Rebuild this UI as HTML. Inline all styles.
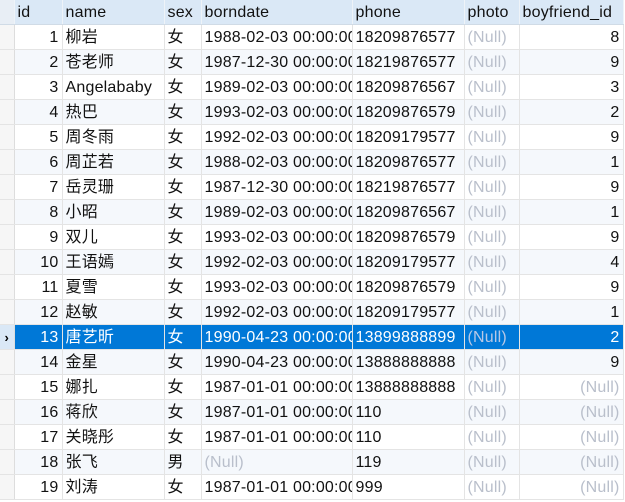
<!DOCTYPE html>
<html><head><meta charset="utf-8"><style>
body{margin:0;width:625px;height:502px;overflow:hidden;background:#fff;font-family:"Liberation Sans","Noto Sans CJK SC",sans-serif;font-size:16px;letter-spacing:0.2px;color:#111}
table{border-collapse:collapse;table-layout:fixed;position:absolute;left:0;top:0;width:623px}
td,th{height:24px;padding:0;border-right:1px solid #e4e4e4;border-bottom:1px solid #e4e4e4;white-space:nowrap;overflow:hidden;font-weight:normal;text-align:left}
td>div,th>div{height:24px;line-height:26px;overflow:hidden;padding:0 3px;white-space:nowrap}
th{background:#dae8f6;border-right:1px solid #eef3f8;border-bottom:1px solid #d0dbe6}
td.i{background:#f6f6f6;border-right:1px solid #ddd}
th.i{background:#e8eef5}
td.n{text-align:right}
.nl{color:#b9bfcb}
tr:nth-child(odd) td{background:#f5f8fc}
tr:nth-child(odd) td.i{background:#f6f6f6}
tr.s td{background:#0078d7;color:#fff}
tr.s td.nl{color:#b8c8e6}
tr.s td.i{background:#dae8f6;color:#000;font-size:13px;font-weight:bold;text-align:center}
tr.s td.i div{padding:0}
</style></head><body>
<table>
<colgroup><col style="width:14px"><col style="width:48px"><col style="width:102px"><col style="width:37px"><col style="width:151px"><col style="width:112px"><col style="width:55px"><col style="width:104px"></colgroup>
<tr><th class="i"><div></div></th><th><div>id</div></th><th><div>name</div></th><th><div>sex</div></th><th><div>borndate</div></th><th><div>phone</div></th><th><div>photo</div></th><th><div>boyfriend_id</div></th></tr>
<tr><td class="i"><div></div></td><td class="n"><div>1</div></td><td><div>柳岩</div></td><td><div>女</div></td><td><div>1988-02-03 00:00:00</div></td><td><div>18209876577</div></td><td class="nl"><div>(Null)</div></td><td class="n"><div>8</div></td></tr>
<tr><td class="i"><div></div></td><td class="n"><div>2</div></td><td><div>苍老师</div></td><td><div>女</div></td><td><div>1987-12-30 00:00:00</div></td><td><div>18219876577</div></td><td class="nl"><div>(Null)</div></td><td class="n"><div>9</div></td></tr>
<tr><td class="i"><div></div></td><td class="n"><div>3</div></td><td><div>Angelababy</div></td><td><div>女</div></td><td><div>1989-02-03 00:00:00</div></td><td><div>18209876567</div></td><td class="nl"><div>(Null)</div></td><td class="n"><div>3</div></td></tr>
<tr><td class="i"><div></div></td><td class="n"><div>4</div></td><td><div>热巴</div></td><td><div>女</div></td><td><div>1993-02-03 00:00:00</div></td><td><div>18209876579</div></td><td class="nl"><div>(Null)</div></td><td class="n"><div>2</div></td></tr>
<tr><td class="i"><div></div></td><td class="n"><div>5</div></td><td><div>周冬雨</div></td><td><div>女</div></td><td><div>1992-02-03 00:00:00</div></td><td><div>18209179577</div></td><td class="nl"><div>(Null)</div></td><td class="n"><div>9</div></td></tr>
<tr><td class="i"><div></div></td><td class="n"><div>6</div></td><td><div>周芷若</div></td><td><div>女</div></td><td><div>1988-02-03 00:00:00</div></td><td><div>18209876577</div></td><td class="nl"><div>(Null)</div></td><td class="n"><div>1</div></td></tr>
<tr><td class="i"><div></div></td><td class="n"><div>7</div></td><td><div>岳灵珊</div></td><td><div>女</div></td><td><div>1987-12-30 00:00:00</div></td><td><div>18219876577</div></td><td class="nl"><div>(Null)</div></td><td class="n"><div>9</div></td></tr>
<tr><td class="i"><div></div></td><td class="n"><div>8</div></td><td><div>小昭</div></td><td><div>女</div></td><td><div>1989-02-03 00:00:00</div></td><td><div>18209876567</div></td><td class="nl"><div>(Null)</div></td><td class="n"><div>1</div></td></tr>
<tr><td class="i"><div></div></td><td class="n"><div>9</div></td><td><div>双儿</div></td><td><div>女</div></td><td><div>1993-02-03 00:00:00</div></td><td><div>18209876579</div></td><td class="nl"><div>(Null)</div></td><td class="n"><div>9</div></td></tr>
<tr><td class="i"><div></div></td><td class="n"><div>10</div></td><td><div>王语嫣</div></td><td><div>女</div></td><td><div>1992-02-03 00:00:00</div></td><td><div>18209179577</div></td><td class="nl"><div>(Null)</div></td><td class="n"><div>4</div></td></tr>
<tr><td class="i"><div></div></td><td class="n"><div>11</div></td><td><div>夏雪</div></td><td><div>女</div></td><td><div>1993-02-03 00:00:00</div></td><td><div>18209876579</div></td><td class="nl"><div>(Null)</div></td><td class="n"><div>9</div></td></tr>
<tr><td class="i"><div></div></td><td class="n"><div>12</div></td><td><div>赵敏</div></td><td><div>女</div></td><td><div>1992-02-03 00:00:00</div></td><td><div>18209179577</div></td><td class="nl"><div>(Null)</div></td><td class="n"><div>1</div></td></tr>
<tr class="s"><td class="i"><div>&#x203A;</div></td><td class="n"><div>13</div></td><td><div>唐艺昕</div></td><td><div>女</div></td><td><div>1990-04-23 00:00:00</div></td><td><div>13899888899</div></td><td class="nl"><div>(Null)</div></td><td class="n"><div>2</div></td></tr>
<tr><td class="i"><div></div></td><td class="n"><div>14</div></td><td><div>金星</div></td><td><div>女</div></td><td><div>1990-04-23 00:00:00</div></td><td><div>13888888888</div></td><td class="nl"><div>(Null)</div></td><td class="n"><div>9</div></td></tr>
<tr><td class="i"><div></div></td><td class="n"><div>15</div></td><td><div>娜扎</div></td><td><div>女</div></td><td><div>1987-01-01 00:00:00</div></td><td><div>13888888888</div></td><td class="nl"><div>(Null)</div></td><td class="n nl"><div>(Null)</div></td></tr>
<tr><td class="i"><div></div></td><td class="n"><div>16</div></td><td><div>蒋欣</div></td><td><div>女</div></td><td><div>1987-01-01 00:00:00</div></td><td><div>110</div></td><td class="nl"><div>(Null)</div></td><td class="n nl"><div>(Null)</div></td></tr>
<tr><td class="i"><div></div></td><td class="n"><div>17</div></td><td><div>关晓彤</div></td><td><div>女</div></td><td><div>1987-01-01 00:00:00</div></td><td><div>110</div></td><td class="nl"><div>(Null)</div></td><td class="n nl"><div>(Null)</div></td></tr>
<tr><td class="i"><div></div></td><td class="n"><div>18</div></td><td><div>张飞</div></td><td><div>男</div></td><td class="nl"><div>(Null)</div></td><td><div>119</div></td><td class="nl"><div>(Null)</div></td><td class="n nl"><div>(Null)</div></td></tr>
<tr><td class="i"><div></div></td><td class="n"><div>19</div></td><td><div>刘涛</div></td><td><div>女</div></td><td><div>1987-01-01 00:00:00</div></td><td><div>999</div></td><td class="nl"><div>(Null)</div></td><td class="n nl"><div>(Null)</div></td></tr>
</table>
</body></html>
